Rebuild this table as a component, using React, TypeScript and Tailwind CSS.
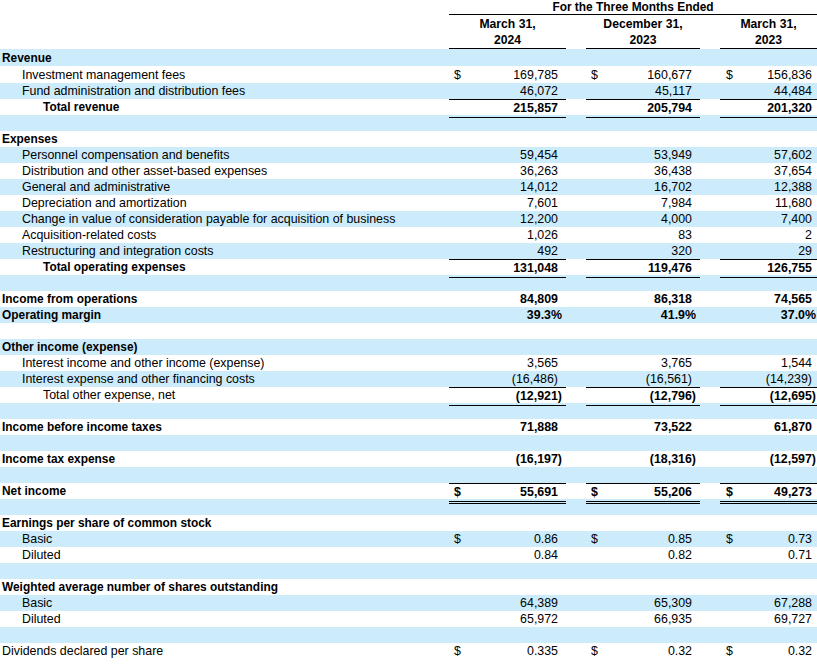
import React from 'react'

type Row = {
    label?: string
    level?: 0 | 1 | 2
    bold?: boolean
    boldVals?: boolean
    vals?: [string, string, string]
    dollar?: boolean
    top?: boolean
    bottom?: 'single' | 'double'
    tall?: boolean
}

const rows: Row[] = [
    { label: 'Revenue', bold: true, tall: true },
    { label: 'Investment management fees', level: 1, vals: ['169,785', '160,677', '156,836'], dollar: true, tall: true },
    { label: 'Fund administration and distribution fees', level: 1, vals: ['46,072', '45,117', '44,484'] },
    { label: 'Total revenue', level: 2, bold: true, vals: ['215,857', '205,794', '201,320'], top: true, bottom: 'single' },
    {},
    { label: 'Expenses', bold: true },
    { label: 'Personnel compensation and benefits', level: 1, vals: ['59,454', '53,949', '57,602'] },
    { label: 'Distribution and other asset-based expenses', level: 1, vals: ['36,263', '36,438', '37,654'] },
    { label: 'General and administrative', level: 1, vals: ['14,012', '16,702', '12,388'] },
    { label: 'Depreciation and amortization', level: 1, vals: ['7,601', '7,984', '11,680'] },
    { label: 'Change in value of consideration payable for acquisition of business', level: 1, vals: ['12,200', '4,000', '7,400'] },
    { label: 'Acquisition-related costs', level: 1, vals: ['1,026', '83', '2'] },
    { label: 'Restructuring and integration costs', level: 1, vals: ['492', '320', '29'] },
    { label: 'Total operating expenses', level: 2, bold: true, vals: ['131,048', '119,476', '126,755'], top: true, bottom: 'single' },
    {},
    { label: 'Income from operations', bold: true, vals: ['84,809', '86,318', '74,565'] },
    { label: 'Operating margin', bold: true, vals: ['39.3%', '41.9%', '37.0%'] },
    {},
    { label: 'Other income (expense)', bold: true },
    { label: 'Interest income and other income (expense)', level: 1, vals: ['3,565', '3,765', '1,544'] },
    { label: 'Interest expense and other financing costs', level: 1, vals: ['(16,486)', '(16,561)', '(14,239)'] },
    { label: 'Total other expense, net', level: 2, boldVals: true, vals: ['(12,921)', '(12,796)', '(12,695)'], top: true, bottom: 'single' },
    {},
    { label: 'Income before income taxes', bold: true, vals: ['71,888', '73,522', '61,870'] },
    {},
    { label: 'Income tax expense', bold: true, vals: ['(16,197)', '(18,316)', '(12,597)'] },
    {},
    { label: 'Net income', bold: true, vals: ['55,691', '55,206', '49,273'], dollar: true, top: true, bottom: 'double' },
    {},
    { label: 'Earnings per share of common stock', bold: true },
    { label: 'Basic', level: 1, vals: ['0.86', '0.85', '0.73'], dollar: true },
    { label: 'Diluted', level: 1, vals: ['0.84', '0.82', '0.71'] },
    {},
    { label: 'Weighted average number of shares outstanding', bold: true },
    { label: 'Basic', level: 1, vals: ['64,389', '65,309', '67,288'] },
    { label: 'Diluted', level: 1, vals: ['65,972', '66,935', '69,727'] },
    {},
    { label: 'Dividends declared per share', vals: ['0.335', '0.32', '0.32'], dollar: true },
]

const gridCols = 'grid grid-cols-[449px_117px_20px_114px_20px_100px]'

const ValueCell: React.FC<{ row: Row; i: number }> = ({ row, i }) => {
    const v = row.vals ? row.vals[i] : ''
    const bold = row.bold || row.boldVals
    // bold negatives and percentages hang out a little past the column
    const hang = bold && (v.endsWith(')') || v.endsWith('%'))
    return (
        <div
            className={[
                'flex justify-between h-full',
                i === 2 ? 'pl-[6px]' : 'pl-[5px]',
                hang ? 'pr-[4px]' : 'pr-2',
                row.top ? 'border-t border-black' : '',
                row.bottom === 'single' ? 'border-b border-black' : '',
                row.bottom === 'double' ? 'border-b-[3px] border-double border-black' : '',
            ].join(' ')}
        >
            <span>{row.dollar ? '$' : ''}</span>
            <span>{v}</span>
        </div>
    )
}

export default function App() {
    return (
        <div className="w-[817px] h-[664px] overflow-hidden bg-white text-black text-[12.4px] font-['Liberation_Sans',Arial,sans-serif]">
            <div className="w-[820px]">
                {/* column headers */}
                <div className={gridCols}>
                    <div />
                    <div className="col-span-5 h-[15px] leading-[14px] border-b border-black font-bold text-[11.9px] text-center pr-[3px]">
                        For the Three Months Ended
                    </div>
                </div>
                <div className={gridCols + ' font-bold text-[12.2px] text-center leading-4'}>
                    <div />
                    <div className="h-[34px] pt-[1px] border-b border-black">March 31,<br />2024</div>
                    <div />
                    <div className="h-[34px] pt-[1px] border-b border-black">December 31,<br />2023</div>
                    <div />
                    <div className="h-[34px] pt-[1px] border-b border-black pr-[3px]">March 31,<br />2023</div>
                </div>

                {rows.map((row, idx) => {
                    const level = row.level ?? 0
                    const valCls = row.bold || row.boldVals ? 'font-bold' : ''
                    return (
                        <div
                            key={idx}
                            className={[
                                gridCols,
                                row.tall ? 'h-[17px] leading-[19px]' : 'h-4 leading-[17px]',
                                idx % 2 === 0 ? 'bg-[#ccecfc]' : 'bg-white',
                            ].join(' ')}
                        >
                            <div
                                className={[
                                    'whitespace-nowrap',
                                    level === 0 ? 'pl-[2px]' : level === 1 ? 'pl-[22px]' : 'pl-[43px]',
                                    row.bold ? 'font-bold text-[11.9px]' : '',
                                ].join(' ')}
                            >
                                {row.label}
                            </div>
                            {row.vals ? (
                                <>
                                    <div className={valCls}>
                                        <ValueCell row={row} i={0} />
                                    </div>
                                    <div />
                                    <div className={valCls}>
                                        <ValueCell row={row} i={1} />
                                    </div>
                                    <div />
                                    <div className={valCls}>
                                        <ValueCell row={row} i={2} />
                                    </div>
                                </>
                            ) : null}
                        </div>
                    )
                })}
            </div>
        </div>
    )
}
